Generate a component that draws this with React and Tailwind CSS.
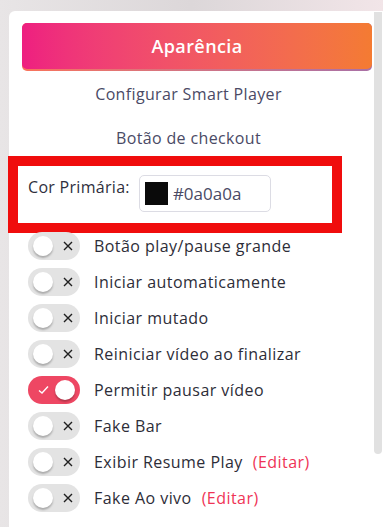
import React from "react";

const options = [
  { label: "Botão play/pause grande", on: false },
  { label: "Iniciar automaticamente", on: false },
  { label: "Iniciar mutado", on: false },
  { label: "Reiniciar vídeo ao finalizar", on: false },
  { label: "Permitir pausar vídeo", on: true },
  { label: "Fake Bar", on: false },
  { label: "Exibir Resume Play", on: false, edit: true },
  { label: "Fake Ao vivo", on: false, edit: true },
];

const Toggle = ({ on }) =>
  on ? (
    <div className="relative w-[52px] h-[28px] rounded-full bg-[#ee4763] shrink-0">
      <svg className="absolute left-[10px] top-[9px]" width="11" height="10" viewBox="0 0 11 10">
        <path d="M1 5.5 L4 8 L10 1.5" fill="none" stroke="#fff" strokeWidth="1.4" />
      </svg>
      <div className="absolute right-[5px] top-[4px] w-[20px] h-[20px] rounded-full bg-white shadow-[0_2px_2px_rgba(0,0,0,0.25)]" />
    </div>
  ) : (
    <div className="relative w-[52px] h-[28px] rounded-full bg-[#e3e3e3] shrink-0">
      <div className="absolute left-[5px] top-[4px] w-[20px] h-[20px] rounded-full bg-white shadow-[0_2px_2px_rgba(0,0,0,0.25)]" />
      <svg className="absolute left-[35px] top-[9px]" width="10" height="10" viewBox="0 0 10 10">
        <path d="M1 1 L9 9 M9 1 L1 9" fill="none" stroke="#1f1f1f" strokeWidth="1.4" />
      </svg>
    </div>
  );

export default function App() {
  return (
    <div
      className="w-[383px] h-[527px] overflow-hidden flex pl-[9px] pt-[11px] bg-gradient-to-r from-[#e8e5e6] via-[#dcd7d9] to-[#f2e5e8]"
      style={{ fontFamily: '"Open Sans", "Noto Sans", sans-serif' }}
    >
      <div className="relative flex-1 bg-white rounded-tl-[6px] pl-[13px] pr-[11px] pt-[12px]">
        {/* scrollbar */}
        <div className="absolute right-[1px] top-[1px] w-[8px] h-[442px] rounded-b-full rounded-t-[3px] bg-[#e1e1e1]" />

        {/* header */}
        <div className="rounded-[5px] pb-[2px] bg-gradient-to-r from-[#f9735a] to-[#a970a6]">
          <div className="h-[46px] rounded-[5px] flex items-center justify-center bg-gradient-to-r from-[#ee1e80] to-[#f47b32]">
            <span className="text-white text-[18px] font-semibold tracking-[0.4px]">Aparência</span>
          </div>
        </div>

        <div className="mt-[12px] pr-[17px] text-center text-[16px] leading-[22px] tracking-[0.35px] text-[#4a4a65]">
          Configurar Smart Player
        </div>
        <div className="mt-[22px] pr-[17px] text-center text-[16px] leading-[22px] tracking-[0.35px] text-[#4a4a65]">
          Botão de checkout
        </div>

        {/* highlighted colour picker */}
        <div className="mt-[7px] -ml-[14px] w-[334px] border-[10px] border-[#f00d0d] bg-white flex items-start pl-[10px] pt-[9px] pb-[11px]">
          <span className="mt-[1px] text-[16px] leading-[22px] tracking-[0.3px] text-[#2f2f3d]">Cor Primária:</span>
          <div className="ml-[9px] w-[132px] h-[37px] rounded-[5px] border border-[#dcdce4] flex items-center pl-[5px]">
            <div className="w-[23px] h-[23px] bg-[#0a0a0a]" />
            <span className="ml-[5px] text-[17px] text-[#4a4a65]">#0a0a0a</span>
          </div>
        </div>

        {/* toggles */}
        <div className="-mt-[1px] flex flex-col gap-[8px] ml-[6px]">
          {options.map((o) => (
            <div key={o.label} className="flex items-center h-[28px]">
              <Toggle on={o.on} />
              <span className="ml-[14px] text-[16px] text-[#2d2d38] tracking-[0.45px]">{o.label}</span>
              {o.edit && <span className="ml-[10px] text-[16px] text-[#ef3456] tracking-[0.45px]">(Editar)</span>}
            </div>
          ))}
        </div>
      </div>
    </div>
  );
}
